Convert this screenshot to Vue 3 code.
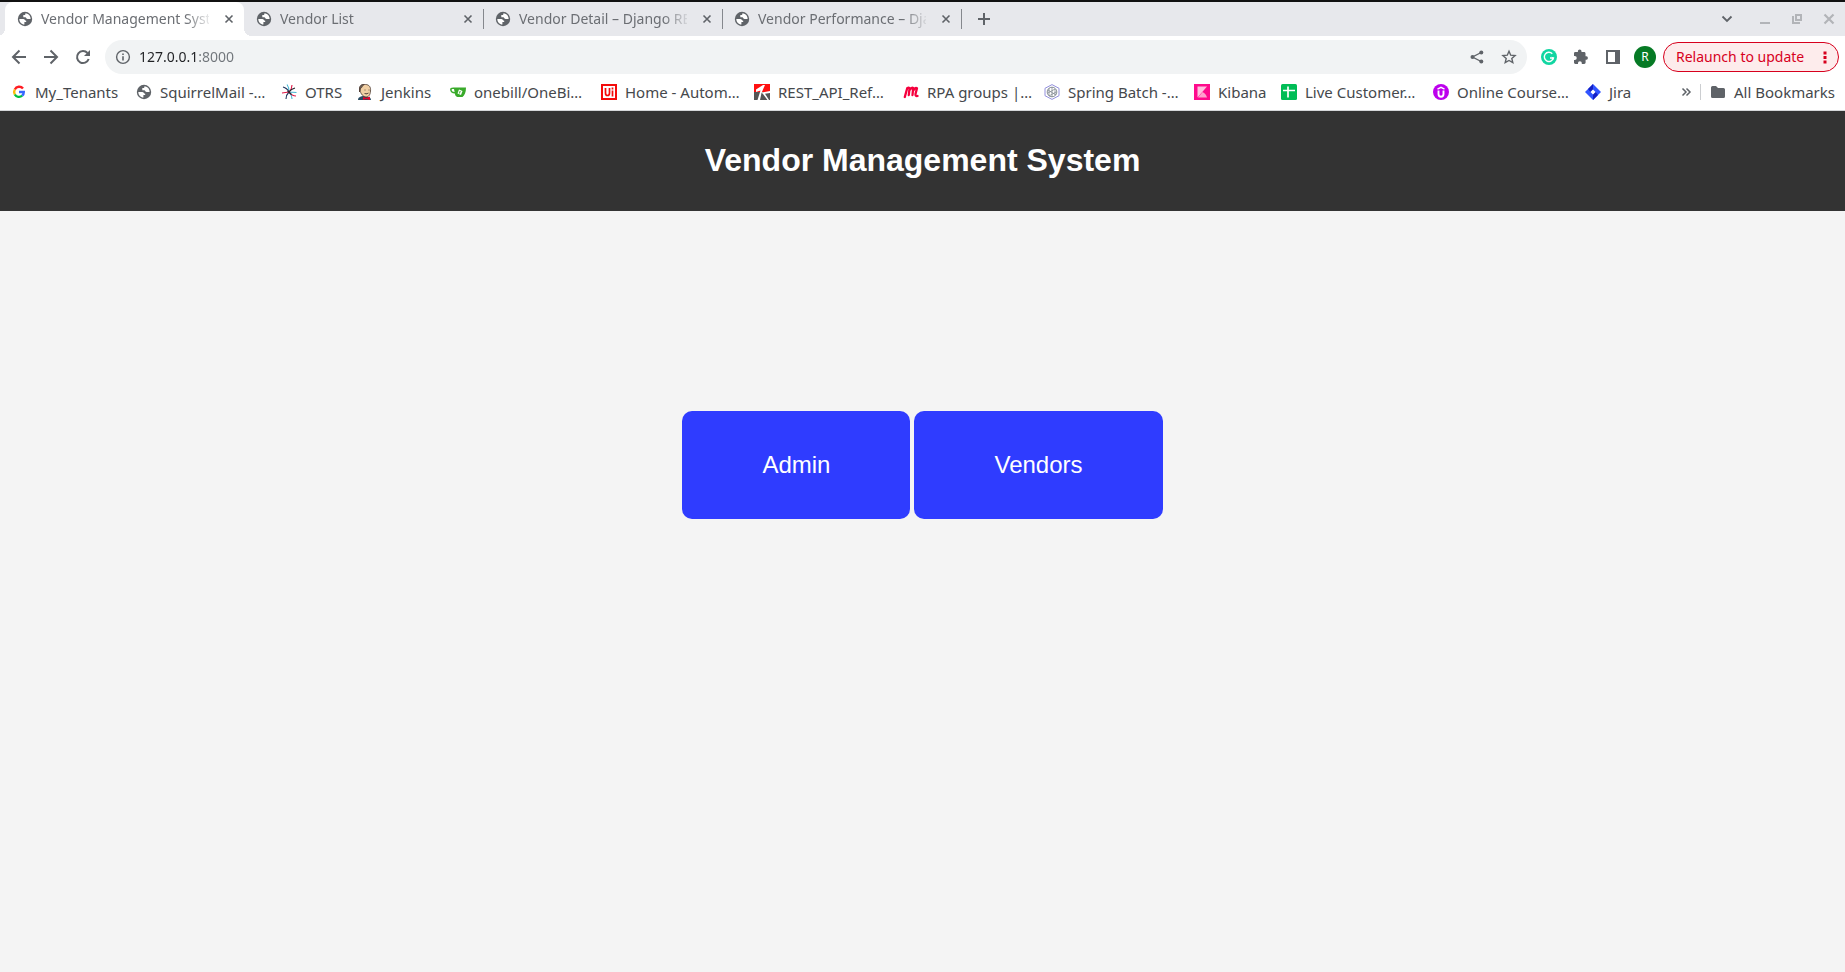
<script setup>
import { ref } from 'vue'

const address = ref('127.0.0.1:8000')
const tabs = [
  { title: 'Vendor Management System', active: true },
  { title: 'Vendor List' },
  { title: 'Vendor Detail – Django REST framework', line: true },
  { title: 'Vendor Performance – Django REST framework', line: true },
]
const bookmarks = [
  { icon: 'google', label: 'My_Tenants' },
  { icon: 'globe', label: 'SquirrelMail -…' },
  { icon: 'otrs', label: 'OTRS' },
  { icon: 'jenkins', label: 'Jenkins' },
  { icon: 'gitea', label: 'onebill/OneBi…' },
  { icon: 'uipath', label: 'Home - Autom…' },
  { icon: 'rest', label: 'REST_API_Ref…' },
  { icon: 'meetup', label: 'RPA groups |…' },
  { icon: 'spring', label: 'Spring Batch -…' },
  { icon: 'kibana', label: 'Kibana' },
  { icon: 'sheet', label: 'Live Customer…' },
  { icon: 'udemy', label: 'Online Course…' },
  { icon: 'jira', label: 'Jira' },
]
</script>

<template>
  <div class="window">
    <svg class="defs" aria-hidden="true">
      <symbol id="globe" viewBox="0 0 16 16">
        <circle cx="8" cy="8" r="7.2" fill="#5f6368" />
        <path d="M2.300 8h3.900c1.500 0 1.700 1.700 3 1.800v1.300H7.400v2.500C4.600 13.500 2.300 11 2.300 8z" fill="#fff" />
        <path d="M9.600 2.500H8.200v1.400H6.300v2.300h2c1 0 1 1.900 2.300 1.900h3c.2-2.600-1.500-4.900-4-5.600z" fill="#fff" />
      </symbol>
    </svg>

    <div class="tab-strip">
      <div class="tabs">
        <div v-for="tab in tabs" :key="tab.title" class="tab" :class="{ active: tab.active, line: tab.line }">
          <svg class="i16"><use href="#globe" /></svg>
          <a href="#" class="tab-title">{{ tab.title }}</a>
          <button class="icon-button tab-close" aria-label="Close tab">
            <svg class="i16" viewBox="0 0 16 16"><path d="M4.500 4.500l7 7m0-7l-7 7" stroke="#5f6368" stroke-width="1.600" /></svg>
          </button>
        </div>
        <button class="icon-button new-tab" aria-label="New tab">
          <svg class="i16" viewBox="0 0 16 16"><path d="M8 2v12M2 8h12" stroke="#5f6368" stroke-width="2" /></svg>
        </button>
      </div>
      <div class="controls">
        <button class="icon-button" aria-label="Search tabs">
          <svg class="i16" viewBox="0 0 16 16"><path d="M3.500 5.500L8 10l4.500-4.500" fill="none" stroke="#5f6368" stroke-width="1.800" /></svg>
        </button>
        <button class="icon-button" aria-label="Minimize">
          <svg class="i16" viewBox="0 0 16 16"><path d="M3 12h10" stroke="#b2b4b8" stroke-width="2" /></svg>
        </button>
        <button class="icon-button" aria-label="Restore">
          <svg class="i16" viewBox="0 0 16 16"><path d="M7 4h5v5H7zM4 5v7h7" fill="none" stroke="#b2b4b8" stroke-width="2" /></svg>
        </button>
        <button class="icon-button" aria-label="Close">
          <svg class="i16" viewBox="0 0 16 16"><path d="M3.500 3.500l9 9m0-9l-9 9" stroke="#b2b4b8" stroke-width="2.200" /></svg>
        </button>
      </div>
    </div>

    <div class="toolbar">
      <div class="nav">
        <button class="icon-button" aria-label="Back">
          <svg class="i16" viewBox="0 0 16 16"><path d="M15 8H2.500M8.500 1.500L2 8l6.500 6.500" fill="none" stroke="#5f6368" stroke-width="2" /></svg>
        </button>
        <button class="icon-button" aria-label="Forward">
          <svg class="i16" viewBox="0 0 16 16"><path d="M1 8h12.500M7.500 1.500L14 8l-6.500 6.500" fill="none" stroke="#5f6368" stroke-width="2" /></svg>
        </button>
        <button class="icon-button" aria-label="Reload">
          <svg class="i16" viewBox="0 0 16 16"><path d="M13.700 10A6 6 0 1 1 12.500 4" fill="none" stroke="#5f6368" stroke-width="2" /><path d="M15 1v6H9z" fill="#5f6368" /></svg>
        </button>
      </div>
      <div class="omnibox">
        <svg class="i16" viewBox="0 0 16 16"><circle cx="8" cy="8" r="6.400" fill="none" stroke="#5f6368" stroke-width="1.400" /><path d="M7.200 7.200h1.600v4.300H7.200zM7.200 4.500h1.600v1.600H7.200z" fill="#5f6368" /></svg>
        <input v-model="address" class="address" type="text" aria-label="Address" spellcheck="false" />
        <button class="icon-button" aria-label="Share">
          <svg class="i16" viewBox="0 0 16 16"><path d="M12.200 3.500L3.500 8l8.700 4.500" fill="none" stroke="#5f6368" stroke-width="1.400" /><circle cx="12.300" cy="3.500" r="2" fill="#5f6368" /><circle cx="3.500" cy="8" r="2" fill="#5f6368" /><circle cx="12.300" cy="12.500" r="2" fill="#5f6368" /></svg>
        </button>
        <button class="icon-button" aria-label="Bookmark this tab">
          <svg class="i16" viewBox="0 0 16 16"><path d="M8 2.200l1.700 4 4.400.4-3.300 2.900 1 4.200L8 11.500l-3.800 2.200 1-4.200-3.300-2.900 4.400-.4z" fill="none" stroke="#5f6368" stroke-width="1.400" /></svg>
        </button>
      </div>
      <div class="extensions">
        <button class="icon-button" aria-label="Grammarly">
          <svg class="i16" viewBox="0 0 16 16"><circle cx="8" cy="8" r="8" fill="#11d6a2" /><path d="M11.300 4.700A4.600 4.600 0 1 0 12.400 9H9" fill="none" stroke="#fff" stroke-width="1.400" /><path d="M10.500 7.500l2.200 1.500-.5 2z" fill="#fff" /></svg>
        </button>
        <button class="icon-button" aria-label="Extensions">
          <svg class="i16" viewBox="0 0 16 16"><path d="M13.500 7.300h-1V4.500c0-.8-.6-1.400-1.400-1.400H8.500v-.8a1.800 1.800 0 0 0-3.600 0v.8H2.300C1.500 3.100 1 3.700 1 4.500V7h.8a1.900 1.900 0 0 1 0 3.900H1v2.600c0 .8.600 1.400 1.400 1.400H5v-.8a1.900 1.900 0 0 1 3.800 0v.8h2.400c.8 0 1.400-.6 1.400-1.400v-2.700h.9a1.800 1.800 0 0 0 0-3.500z" fill="#5f6368" /></svg>
        </button>
        <button class="icon-button" aria-label="Side panel">
          <svg class="i16" viewBox="0 0 16 16"><path d="M1 1h14v14H1zM3 3v10h7V3z" fill="#5f6368" fill-rule="evenodd" /></svg>
        </button>
      </div>
      <button class="avatar" aria-label="Profile">R</button>
      <button class="relaunch">
        Relaunch to update
        <svg class="i16" viewBox="0 0 16 16"><path d="M6.500 2.500h3v3h-3zM6.500 7h3v3h-3zM6.500 11.500h3v3h-3z" fill="#d7001d" /></svg>
      </button>
    </div>

    <nav class="bookmark-bar" aria-label="Bookmarks">
      <div class="bookmarks">
        <a v-for="b in bookmarks" :key="b.label" href="#" class="bookmark">
          <svg v-if="b.icon === 'globe'" class="i16"><use href="#globe" /></svg>
          <svg v-else class="i16" viewBox="0 0 16 16">
            <g v-if="b.icon === 'google'" fill="none" stroke-width="2.400">
              <path d="M12 4.600A4.900 4.900 0 0 0 3.800 5.500" stroke="#ff1d23" />
              <path d="M3.800 5.500a5 5 0 0 0 0 5" stroke="#fbbc05" />
              <path d="M3.800 10.500a4.900 4.900 0 0 0 7.400 1.200" stroke="#00c040" />
              <path d="M11.200 11.700A4.900 4.900 0 0 0 12.800 8H8" stroke="#3567ff" />
            </g>
            <g v-else-if="b.icon === 'otrs'" fill="none" stroke-width="1.100">
              <path d="M8 8Q8 3 6 .500M8 8l7.500.500M8 8q3 3 3 7" stroke="#43b6d2" />
              <path d="M8 8Q6 4 2 3M8 8q-3 3-3 7" stroke="#21345d" />
              <path d="M8 8q3-3 3-7M8 8l-7 1M8 8q3 4 7 4" stroke="#df1745" />
              <path d="M8 8q2-3 6-4M6.500 7l4 3.500" stroke="#26252f" />
            </g>
            <g v-else-if="b.icon === 'jenkins'">
              <path d="M1 16c0-3 3-4 6-4s7 1 7 4z" fill="#294b62" />
              <path d="M3 6C2.500 2 5 .500 8.500.500S14 3 13.500 7c-.2 4-2 6-4.500 6s-5.500-3-6-7z" fill="#f0cfa4" stroke="#4b3830" stroke-width=".8" />
              <path d="M2.500 8V4c0-2 2-4 5-4-3 2-2 4-4 4zM7.500 6h1m3 0h1M7.500 9.500q2 1 4-.500" fill="#70655d" stroke="#4b3830" stroke-width=".8" />
              <path d="M6 13l3 1 4-1.500V16l-4-1-3 1z" fill="#e4002b" />
            </g>
            <g v-else-if="b.icon === 'gitea'">
              <path d="M4.500 3.500H16c0 5-1.500 8-3.500 9.500h-5C5.800 12.500 5 11 4.800 9.500 2 9.500.300 8 .100 5.800 0 4 1.300 3.200 4.500 3.500zM4 5c-1.700-.200-2.400 0-2.400 1 .1 1.200 1.200 2 3 2z" fill="#39aa2a" fill-rule="evenodd" />
              <path d="M9 5.500L12.500 7l-1.500 4-3.500-1.600z" fill="#fff" />
              <path d="M10.200 7l-.8 2.500" stroke="#39aa2a" fill="none" />
            </g>
            <g v-else-if="b.icon === 'uipath'">
              <path d="M1 1h14v14H1z" fill="#fff" stroke="#f40b0b" stroke-width="2" />
              <path d="M4.500 4v5q0 2.500 2 2.500T8.500 9V4M11.500 6.500v6M11.500 3.500v2" fill="none" stroke="#f40b0b" stroke-width="1.700" />
            </g>
            <g v-else-if="b.icon === 'rest'">
              <path d="M0 0h16v8H0z" fill="#ff1010" />
              <path d="M0 8h16v8H0z" fill="#555" />
              <path d="M2 5.500L9 1h2L7.500 9 6 16H3.500L6.500 6.500 2 8zM7.500 8.500L16 7v2l-5 .8 4 6.200h-1.500L9 10z" fill="#fff" />
            </g>
            <path v-else-if="b.icon === 'meetup'" d="M1.800 13L4.200 4.200M4.200 4.200Q6 3 6.500 4.500L5.800 11M6.300 6.500Q8.500 3 10.200 4L9.500 11M10 7Q12 3.200 14 4.200L12.500 10Q12.300 12.500 14.500 12" fill="none" stroke="#f5003d" stroke-width="2.300" stroke-linejoin="round" stroke-linecap="round" />
            <g v-else-if="b.icon === 'spring'" fill="none">
              <path d="M8 .600l7 3.700v7.400l-7 3.700-7-3.700V4.300z" stroke="#928fdc" />
              <circle cx="8" cy="8" r="4.800" stroke="#858d94" />
              <path d="M5 4v8m3-9v10m3-8v6M4 9l7-4M5 12l7-4M4 6l8 5" stroke="#858d94" stroke-width=".8" />
            </g>
            <g v-else-if="b.icon === 'kibana'">
              <path d="M0 0h16v16H0z" fill="#ff0a8c" />
              <path d="M3.500 2.500H13L3.500 13.500z" fill="#ffc0df" />
              <path d="M8.500 8q3.500 1.500 4.500 5.500H4z" fill="#ffa0cd" />
            </g>
            <g v-else-if="b.icon === 'sheet'">
              <rect width="16" height="16" rx="1.500" fill="#00bd56" />
              <path d="M2 6.500h12M7 2.500v11" stroke="#fff" stroke-width="1.700" />
            </g>
            <g v-else-if="b.icon === 'udemy'">
              <circle cx="8" cy="8" r="8" fill="#bd00ed" />
              <path d="M5.500 6.500v3.500q0 2.700 2.500 2.700t2.500-2.700V6.500" fill="none" stroke="#fff" stroke-width="1.900" />
              <path d="M4.500 5.200L8 3.300l3.500 1.900" fill="none" stroke="#fff" stroke-width="1.400" />
            </g>
            <g v-else>
              <path d="M8 0l8 8-8 8-8-8z" fill="#3154ff" />
              <path d="M8 0v5.500L5.500 8 3 5zM8 16v-5.500L10.500 8l2.500 3z" fill="#1420c4" />
              <path d="M8 5.500L10.500 8 8 10.500 5.500 8z" fill="#fff" />
            </g>
          </svg>
          <span>{{ b.label }}</span>
        </a>
      </div>
      <button class="icon-button more" aria-label="More bookmarks">
        <svg class="i16" viewBox="0 0 16 16"><path d="M4.500 4.500L8 8l-3.500 3.500M8.500 4.500L12 8l-3.500 3.500" fill="none" stroke="#5f6368" stroke-width="1.500" /></svg>
      </button>
      <a href="#" class="bookmark all">
        <svg class="i16" viewBox="0 0 16 16"><path d="M1 3.500Q1 2 2.500 2H6l2 2h5.500Q15 4 15 5.500v7q0 1.500-1.500 1.500h-11Q1 14 1 12.500z" fill="#5f6368" /></svg>
        <span>All Bookmarks</span>
      </a>
    </nav>

    <header class="page-header"><h1>Vendor Management System</h1></header>
    <main class="page">
      <button class="action">Admin</button>
      <button class="action">Vendors</button>
    </main>
  </div>
</template>

<style>
body { background: #f4f4f4; }
</style>

<style scoped>
.window { display: flex; flex-direction: column; min-height: 100vh; font-family: "Noto Sans", "Open Sans", sans-serif; font-size: 14px; color: #45484c; }
.window * { box-sizing: border-box; }
.defs { display: none; }
.i16 { display: block; flex: none; width: 16px; height: 16px; }
button { border: 0; padding: 0; background: none; font: inherit; cursor: pointer; }
a { color: inherit; text-decoration: none; }
.icon-button { flex: none; width: 16px; height: 16px; }

.tab-strip { display: flex; justify-content: space-between; height: 36px; padding: 0 8px 0 5px; border-top: 2px solid #111; background: #e7e8ec; }
.tabs { display: flex; align-items: center; }
.tab { position: relative; display: flex; align-items: center; gap: 8px; width: 239px; height: 34px; padding: 0 7px 0 12px; color: #6b6e73; }
.tab.active { border-radius: 8px 8px 0 0; background: #fff; }
.tab.active::before, .tab.active::after { content: ""; position: absolute; bottom: 0; width: 8px; height: 8px; }
.tab.active::before { right: 100%; background: radial-gradient(circle at 0 0, transparent 8px, #fff 8px); }
.tab.active::after { left: 100%; background: radial-gradient(circle at 100% 0, transparent 8px, #fff 8px); }
.tab.line, .new-tab { background: linear-gradient(#85888d, #85888d) 0 50% / 1px 20px no-repeat; }
.tab-title { flex: 1; overflow: hidden; white-space: nowrap; line-height: 20px; -webkit-mask-image: linear-gradient(90deg, #000 144px, transparent 172px); mask-image: linear-gradient(90deg, #000 144px, transparent 172px); }
.tab-close { margin-left: 4px; }
.new-tab { display: flex; align-items: center; justify-content: flex-end; width: 31px; height: 34px; }
.controls { display: flex; align-items: center; gap: 16px; }
.controls button:first-child { margin-right: 6px; }

.toolbar { display: flex; align-items: center; height: 42px; padding: 0 6px 0 11px; background: #fff; }
.nav { display: flex; gap: 16px; margin-right: 14px; }
.omnibox { display: flex; flex: 1; align-items: center; gap: 16px; min-width: 0; height: 34px; padding: 0 10px; border-radius: 17px; background: #f1f3f4; }
.address { flex: 1; min-width: 0; height: 24px; margin-left: -8px; padding: 0 0 2px; border: 0; outline: 0; background: linear-gradient(90deg, #202124 59px, #70757a 59px); -webkit-background-clip: text; background-clip: text; color: transparent; caret-color: #202124; font: inherit; }
.extensions { display: flex; gap: 16px; margin: 0 13px 0 14px; }
.avatar { flex: none; width: 22px; height: 22px; margin-right: 7px; border-radius: 50%; background: #067a25; color: #fff; font-size: 12px; line-height: 22px; }
.relaunch { display: flex; flex: none; align-items: center; justify-content: space-between; width: 176px; height: 30px; padding: 0 5px 1px 12px; border: 1px solid #d7001d; border-radius: 15px; background: #fdecec; color: #d7001d; white-space: nowrap; }

.bookmark-bar { display: flex; align-items: center; height: 33px; padding: 0 10px 4px 11px; border-bottom: 1px solid #d5d7d9; background: #fff; font-size: 15px; }
.bookmarks { display: grid; flex: 1; grid-template-columns: 125px 145px 76px 93px 151px 153px 149px 141px 150px 87px 152px 152px 1fr; }
.bookmark { display: flex; align-items: center; gap: 8px; line-height: 20px; white-space: nowrap; }
.more { margin-right: 6px; }
.all { padding-left: 10px; background: linear-gradient(#ccced1, #ccced1) 0 50% / 1px 16px no-repeat; }

.page-header { display: flex; align-items: center; justify-content: center; height: 100px; padding-bottom: 2px; background: #333; color: #fff; font-family: "Liberation Sans", Arial, sans-serif; }
.page-header h1 { margin: 0; font-size: 32px; line-height: 36px; }
.page { display: flex; flex: 1; align-items: flex-start; justify-content: center; gap: 4px; padding-top: 200px; background: #f4f4f4; font-family: "Liberation Sans", Arial, sans-serif; }
.action { padding: 40px 80px; border-radius: 10px; background: #2f3cff; color: #fff; font-size: 24px; line-height: 28px; }
</style>
